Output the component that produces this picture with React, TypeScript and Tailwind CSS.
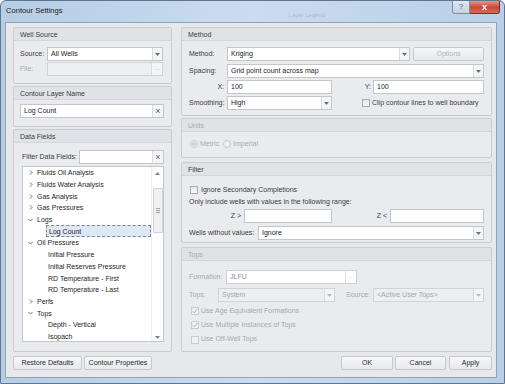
import React from "react";

const Arrow = ({ color = "#6b6f75" }: { color?: string }) => (
  <svg width="5" height="3" viewBox="0 0 5 3">
    <path d="M0 0h5L2.5 3z" fill={color} />
  </svg>
);

function Combo({ value, className = "", disabled = false }: { value: string; className?: string; disabled?: boolean }) {
  return (
    <div
      className={`flex h-[14px] items-stretch border ${
        disabled ? "border-[#d0d3d8] bg-[#eceef1] text-[#a3a7ad]" : "border-[#c3c6cc] bg-white text-[#1b1b1b]"
      } ${className}`}
    >
      <span className="flex-1 truncate pl-[3px] leading-[12px]">{value}</span>
      <span className="flex w-[10px] items-center justify-center border-l border-[#d9dce0] bg-[#f4f5f7]">
        <Arrow color={disabled ? "#b5b8bd" : "#6b6f75"} />
      </span>
    </div>
  );
}

function Field({ value = "", className = "", side }: { value?: string; className?: string; side?: "x" | "dots" | "dotsOff" }) {
  return (
    <div className={`flex h-[14px] items-stretch border border-[#c3c6cc] ${side === "dotsOff" ? "bg-[#eceef1]" : "bg-white"} ${className}`}>
      <span className="flex-1 truncate pl-[3px] leading-[12px] text-[#1b1b1b]">{value}</span>
      {side === "x" && (
        <span className="flex w-[11px] items-center justify-center border-l border-[#d9dce0] bg-[#f4f5f7] text-[9px] leading-none text-[#555]">
          ×
        </span>
      )}
      {(side === "dots" || side === "dotsOff") && (
        <span className="flex w-[11px] items-center justify-center border-l border-[#d9dce0] bg-[#f4f5f7] text-[6px] leading-none text-[#a9adb2]">
          ···
        </span>
      )}
    </div>
  );
}

function Check({ checked = false, disabled = false }: { checked?: boolean; disabled?: boolean }) {
  return (
    <span
      className={`flex h-[8px] w-[8px] items-center justify-center border ${
        disabled ? "border-[#c9ccd1] bg-[#eef0f2]" : "border-[#a7abb1] bg-gradient-to-b from-[#e4e6e9] to-[#f7f8f9]"
      }`}
    >
      {checked && (
        <svg width="6" height="6" viewBox="0 0 6 6">
          <path d="M0.6 3.2L2.3 4.9L5.4 0.9" fill="none" stroke="#b3b6bb" strokeWidth="1" />
        </svg>
      )}
    </span>
  );
}

function Radio({ on = false }: { on?: boolean }) {
  return (
    <span className="flex h-[8px] w-[8px] items-center justify-center rounded-full border border-[#c6c9ce] bg-[#eef0f2]">
      {on && <span className="h-[4px] w-[4px] rounded-full border border-[#b9bcc1]" />}
    </span>
  );
}

function Btn({ label, className = "", disabled = false }: { label: string; className?: string; disabled?: boolean }) {
  return (
    <div
      className={`flex h-[14px] items-center justify-center rounded-[2px] border border-[#c6c9ce] bg-gradient-to-b from-[#f6f7f8] to-[#e7e9ec] ${
        disabled ? "text-[#b0b4b9]" : "text-[#2a2a2a]"
      } ${className}`}
    >
      {label}
    </div>
  );
}

function Group({
  title,
  h,
  className = "",
  disabled = false,
  children,
}: {
  title: string;
  h: string;
  className?: string;
  disabled?: boolean;
  children?: React.ReactNode;
}) {
  return (
    <div className={`flex flex-col overflow-hidden rounded-[2px] border border-[#c9ccd1] bg-[#e9ebee] ${h} ${className}`}>
      <div
        className={`h-[13px] shrink-0 border-b border-[#d3d6da] bg-[#dfe2e6] pl-[6px] leading-[13px] ${
          disabled ? "text-[#a6aaaf]" : "text-[#3c3c3c]"
        }`}
      >
        {title}
      </div>
      {children}
    </div>
  );
}

const Chevron = ({ open }: { open: boolean }) =>
  open ? (
    <svg width="5" height="4" viewBox="0 0 5 4">
      <path d="M0.5 1l2 2 2-2" fill="none" stroke="#5c5f64" strokeWidth="0.9" />
    </svg>
  ) : (
    <svg width="4" height="5" viewBox="0 0 4 5">
      <path d="M1 0.5l2 2-2 2" fill="none" stroke="#5c5f64" strokeWidth="0.9" />
    </svg>
  );

const tree: { label: string; level: number; open?: boolean; sel?: boolean }[] = [
  { label: "Fluids Oil Analysis", level: 0, open: false },
  { label: "Fluids Water Analysis", level: 0, open: false },
  { label: "Gas Analysis", level: 0, open: false },
  { label: "Gas Pressures", level: 0, open: false },
  { label: "Logs", level: 0, open: true },
  { label: "Log Count", level: 1, sel: true },
  { label: "Oil Pressures", level: 0, open: true },
  { label: "Initial Pressure", level: 1 },
  { label: "Initial Reserves Pressure", level: 1 },
  { label: "RD Temperature - First", level: 1 },
  { label: "RD Temperature - Last", level: 1 },
  { label: "Perfs", level: 0, open: false },
  { label: "Tops", level: 0, open: true },
  { label: "Depth - Vertical", level: 1 },
  { label: "Isopach", level: 1 },
];

export default function App() {
  return (
    <div className="flex h-[384px] w-[505px] flex-col overflow-hidden rounded-t-[6px] border border-[#5f7590] bg-gradient-to-r from-[#b6cde6] via-[#cadcef] to-[#b9cfe7] font-['Liberation_Sans',Arial,sans-serif] text-[7px] text-[#1e1e1e]">
      {/* title bar */}
      <div className="flex h-[21px] shrink-0 items-start">
        <div className="pl-[5px] pt-[6px] text-[7.6px] leading-none text-[#1a1a1a]">Contour Settings</div>
        <div className="ml-[226px] pt-[11px] text-[6px] leading-none text-[#a7bbd1]">Layer Legend</div>
        <div className="ml-auto mr-[4px] flex">
          <div className="flex h-[13px] w-[18px] items-center justify-center rounded-bl-[3px] border border-t-0 border-[#7d8fa6] bg-gradient-to-b from-[#dfe8f2] to-[#c2d2e3] text-[8px] leading-none text-[#4f5f74]">
            ?
          </div>
          <div className="flex h-[13px] w-[30px] items-center justify-center rounded-br-[3px] border border-l-0 border-t-0 border-[#7a2d27] bg-gradient-to-b from-[#e29a8c] via-[#c9473a] to-[#d06a55] text-[9px] font-bold leading-none text-white">
            x
          </div>
        </div>
      </div>

      <div className="flex flex-1">
        <div className="w-[4px] shrink-0" />
        {/* dialog body */}
        <div className="flex h-[356px] w-[492px] shrink-0 gap-[9px] border border-[#8fa3bb] bg-[#e6e8ec] pl-[7px] pr-[4px] pt-[4px]">
          {/* left column */}
          <div className="flex w-[159px] flex-col">
            <Group title="Well Source" h="h-[57px]">
              <div className="mt-[6px] flex items-center pl-[6px] pr-[8px]">
                <span className="w-[27px] text-[#3c3c3c]">Source:</span>
                <Combo value="All Wells" className="flex-1" />
              </div>
              <div className="mt-[1px] flex items-center pl-[6px] pr-[8px]">
                <span className="w-[27px] text-[#a6aaaf]">File:</span>
                <Field side="dotsOff" className="flex-1 border-[#cfd2d6]" />
              </div>
            </Group>

            <Group title="Contour Layer Name" h="h-[41px]" className="mt-[2px]">
              <div className="mt-[4px] pl-[6px] pr-[7px]">
                <Field value="Log Count" side="x" />
              </div>
            </Group>

            <Group title="Data Fields" h="h-[223px]" className="mt-[2px]">
              <div className="mt-[7px] flex items-center pl-[8px] pr-[7px]">
                <span className="w-[57px] text-[#3c3c3c]">Filter Data Fields:</span>
                <Field side="x" className="flex-1" />
              </div>
              <div className="ml-[8px] mr-[7px] mt-[2px] flex h-[176px] border border-[#c3c6cc] bg-white">
                <div className="flex-1 pt-[0px]">
                  {tree.map((t) => (
                    <div key={t.label} className="flex h-[11.7px] items-center text-[#1e1e1e]">
                      {t.level === 0 ? (
                        <>
                          <span className="flex w-[14px] justify-end pr-[4px]">
                            <Chevron open={!!t.open} />
                          </span>
                          <span className="leading-none">{t.label}</span>
                        </>
                      ) : (
                        <span
                          className={`ml-[23px] flex h-full flex-1 items-center pl-[2px] leading-none ${
                            t.sel ? "h-[13px] border border-dashed border-[#7d8591] bg-[#dde8f4]" : ""
                          }`}
                        >
                          {t.label}
                        </span>
                      )}
                    </div>
                  ))}
                </div>
                <div className="flex w-[12px] flex-col items-center border-l border-[#eceef0] bg-white">
                  <div className="mt-[5px] rotate-180">
                    <Arrow color="#7d8187" />
                  </div>
                  <div className="mt-[13px] flex h-[45px] w-[10px] items-center justify-center rounded-[1px] border border-[#cdd0d5] bg-[#eef0f2]">
                    <div className="flex flex-col gap-[1px]">
                      <span className="h-px w-[4px] bg-[#9ea2a8]" />
                      <span className="h-px w-[4px] bg-[#9ea2a8]" />
                      <span className="h-px w-[4px] bg-[#9ea2a8]" />
                    </div>
                  </div>
                  <div className="mt-auto mb-[2px]">
                    <Arrow color="#7d8187" />
                  </div>
                </div>
              </div>
            </Group>

            <div className="mt-[4px] flex gap-[2px]">
              <Btn label="Restore Defaults" className="w-[69px]" />
              <Btn label="Contour Properties" className="w-[68px]" />
            </div>
          </div>

          {/* right column */}
          <div className="flex w-[311px] flex-col">
            <Group title="Method" h="h-[89px]">
              <div className="flex flex-col pl-[7px] pr-[7px]">
                <div className="mt-[6px] flex items-center">
                  <span className="w-[38px] text-[#3c3c3c]">Method:</span>
                  <Combo value="Kriging" className="w-[183px]" />
                  <Btn label="Options" disabled className="ml-[3px] flex-1" />
                </div>
                <div className="mt-[3px] flex items-center">
                  <span className="w-[38px] text-[#3c3c3c]">Spacing:</span>
                  <Combo value="Grid point count across map" className="flex-1" />
                </div>
                <div className="mt-[2px] flex items-center">
                  <span className="w-[38px] pr-[3px] text-right text-[#3c3c3c]">X:</span>
                  <Field value="100" className="w-[105px]" />
                  <span className="flex-1 pr-[2px] text-right text-[#3c3c3c]">Y:</span>
                  <Field value="100" className="w-[111px]" />
                </div>
                <div className="mt-[2px] flex items-center">
                  <span className="w-[38px] text-[#3c3c3c]">Smoothing:</span>
                  <Combo value="High" className="w-[105px]" />
                  <span className="ml-[30px]">
                    <Check />
                  </span>
                  <span className="ml-[2px] text-[#3c3c3c]">Clip contour lines to well boundary</span>
                </div>
              </div>
            </Group>

            <Group title="Units" h="h-[40px]" disabled className="mt-[2px]">
              <div className="mt-[7px] flex items-center pl-[8px] text-[#a9adb2]">
                <Radio on />
                <span className="ml-[2px]">Metric</span>
                <span className="ml-[4px]">
                  <Radio />
                </span>
                <span className="ml-[2px]">Imperial</span>
              </div>
            </Group>

            <Group title="Filter" h="h-[81px]" className="mt-[4px]">
              <div className="flex flex-col pl-[7px] pr-[7px] text-[#3c3c3c]">
                <div className="mt-[8px] flex h-[12px] items-center">
                  <span className="ml-[1px]">
                    <Check />
                  </span>
                  <span className="ml-[3px]">Ignore Secondary Completions</span>
                </div>
                <div className="flex h-[13px] items-center">Only include wells with values in the following range:</div>
                <div className="flex items-center">
                  <span className="w-[55px] pr-[3px] text-right">Z &gt;</span>
                  <Field className="h-[13px] w-[88px]" />
                  <span className="flex-1 pr-[3px] text-right">Z &lt;</span>
                  <Field className="h-[13px] w-[94px]" />
                </div>
                <div className="mt-[3px] flex items-center">
                  <span className="w-[69px]">Wells without values:</span>
                  <Combo value="Ignore" className="flex-1" />
                </div>
              </div>
            </Group>

            <Group title="Tops" h="h-[105px]" disabled className="mt-[4px]">
              <div className="flex flex-col pl-[7px] pr-[7px] text-[#a6aaaf]">
                <div className="mt-[9px] flex items-center">
                  <span className="w-[37px]">Formation:</span>
                  <div className="flex h-[14px] w-[131px] items-stretch border border-[#cdd0d5] bg-white">
                    <span className="flex-1 pl-[3px] leading-[12px] text-[#8a8e94]">JLFU</span>
                    <span className="flex w-[11px] items-center justify-center border-l border-[#dcdfe3] text-[6px] leading-none text-[#b3b6bb]">
                      ···
                    </span>
                  </div>
                </div>
                <div className="mt-[4px] flex items-center">
                  <span className="w-[29px]">Tops:</span>
                  <Combo value="System" disabled className="w-[117px]" />
                  <span className="ml-[11px] w-[27px]">Source:</span>
                  <Combo value="<Active User Tops>" disabled className="flex-1" />
                </div>
                <div className="mt-[2px] flex h-[14px] items-center pl-[2px]">
                  <Check checked disabled />
                  <span className="ml-[2px]">Use Age Equivalent Formations</span>
                </div>
                <div className="flex h-[14px] items-center pl-[2px]">
                  <Check checked disabled />
                  <span className="ml-[2px]">Use Multiple Instances of Tops</span>
                </div>
                <div className="flex h-[15px] items-center pl-[2px]">
                  <Check disabled />
                  <span className="ml-[2px]">Use Off-Well Tops</span>
                </div>
              </div>
            </Group>

            <div className="mt-[4px] flex justify-end">
              <Btn label="OK" className="w-[52px]" />
              <Btn label="Cancel" className="ml-[2px] w-[51px]" />
              <Btn label="Apply" className="ml-[3px] w-[43px]" />
            </div>
          </div>
        </div>
        <div className="flex-1" />
      </div>
    </div>
  );
}
